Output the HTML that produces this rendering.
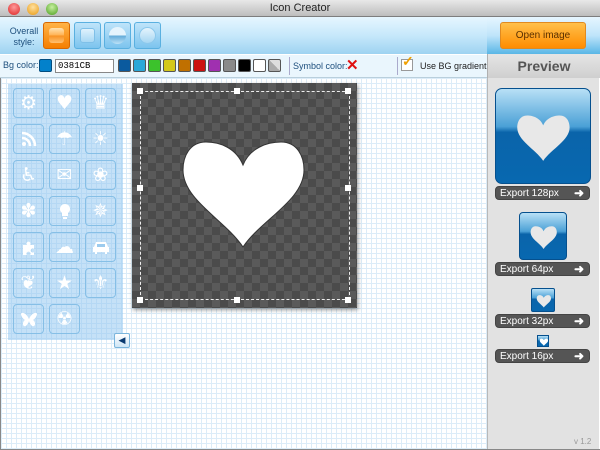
<!DOCTYPE html>
<html><head><meta charset="utf-8"><style>
*{margin:0;padding:0;box-sizing:border-box}
body{width:600px;height:450px;overflow:hidden;font-family:"Liberation Sans",sans-serif;position:relative;background:#fff}
.abs{position:absolute}
#title{left:0;top:0;width:600px;height:17px;background:linear-gradient(#e8e8e8,#bdbdbd);border-bottom:1px solid #7d7d7d;text-align:center;font-size:11px;line-height:17px;color:#222}
.tl{top:3px;width:12px;height:12px;border-radius:50%}
#tb{left:0;top:17px;width:487px;height:37px;background:linear-gradient(#e6f6ff,#c6e8fb 50%,#9ed3f1)}
#tbr{left:487px;top:17px;width:113px;height:37px;background:linear-gradient(#e6f6ff,#bfe4fa 50%,#59b6e6)}
#row2{left:0;top:54px;width:487px;height:24px;background:#eaf6fd;border-top:1px solid #fff;border-bottom:1px solid #b9cfdc}
#prevh{left:487px;top:54px;width:113px;height:24px;background:linear-gradient(#e5e5e5,#cfcfcf);border-left:1px solid #b0b0b0;font-weight:bold;font-size:14px;color:#555;text-align:center;line-height:24px}
#main{left:1px;top:78px;width:486px;height:371px;background-color:#fff;background-image:linear-gradient(#dcecf8 1px,transparent 1px),linear-gradient(90deg,#dcecf8 1px,transparent 1px);background-size:5px 5px}
#side{left:487px;top:78px;width:112px;height:371px;background:#e2e2e2;border-left:1px solid #b8b8b8}
.sb{top:22px;width:27px;height:27px;border-radius:3px;border:1px solid #5ab0e0;background:linear-gradient(#bfe4fa,#7cc4ee)}
.sw{top:59px;width:13px;height:13px;border:1px solid #555;border-radius:2px}
.lbl{font-size:9px;color:#1d4f7d}
#panel{left:8px;top:84px;width:115px;height:256px;background:rgba(150,200,240,.55)}
.ib{width:31px;height:30px;border:1px solid #86bfe6;border-radius:4px;color:#fff;font-family:"DejaVu Sans",sans-serif;font-size:19px;text-align:center;line-height:29px}
#canvas{left:132px;top:83px;width:225px;height:225px;background-color:#4b4b4b;background-image:linear-gradient(45deg,#5a5a5a 25%,transparent 25%,transparent 75%,#5a5a5a 75%),linear-gradient(45deg,#5a5a5a 25%,transparent 25%,transparent 75%,#5a5a5a 75%);background-size:16px 16px;background-position:0 0,8px 8px;box-shadow:1px 2px 4px rgba(0,0,0,.4)}
.h{width:6px;height:6px;background:#fff}
.ex{left:495px;width:95px;height:14px;background:#555;border-radius:4px;color:#fff;font-size:10px;line-height:13px;padding-left:4px;border:1px solid #444}
.ex span{position:absolute;right:5px;top:0;font-weight:bold;font-size:12px}
.ic{background:linear-gradient(#b8e0f6,#4aa0d6 40%,#0a64aa 46%,#0868b0);border:1px solid #05508e;overflow:hidden}
</style></head><body>
<div id="title" class="abs">Icon Creator</div>
<div class="abs tl" style="left:8px;background:radial-gradient(circle at 50% 35%,#ff9a9a,#d22)"></div>
<div class="abs tl" style="left:27px;background:radial-gradient(circle at 50% 35%,#ffe0a0,#e89a10)"></div>
<div class="abs tl" style="left:46px;background:radial-gradient(circle at 50% 35%,#c8f0a0,#4a9e1e)"></div>
<div id="tb" class="abs"></div>
<div id="tbr" class="abs"></div>
<div class="abs lbl" style="left:8px;top:26px;font-size:9px;line-height:11px;text-align:center;width:32px">Overall style:</div>
<div class="abs sb" style="left:43px;background:linear-gradient(#ffb347,#f57f00);border-color:#d86800"><div style="margin:5px;height:15px;border-radius:3px;background:linear-gradient(#ffe2b0,#ffb050 50%,#f79020 50%,#ffc070)"></div></div>
<div class="abs sb" style="left:74px"><div style="margin:5px;height:15px;border-radius:3px;background:linear-gradient(#e0f2fd,#a8d8f4);border:1px solid #7fc0e8"></div></div>
<div class="abs sb" style="left:104px"><div style="margin:4px;height:17px;border-radius:50%;background:linear-gradient(#e5f4fd 50%,#5fa9d8 50%,#bde2f7)"></div></div>
<div class="abs sb" style="left:134px"><div style="margin:4px;height:17px;border-radius:50%;background:linear-gradient(#e5f4fd,#a6d6f2);border:1px solid #8cc8ec"></div></div>
<div class="abs" style="left:500px;top:22px;width:86px;height:27px;border-radius:3px;background:linear-gradient(#ffc04a,#ff8c00);border:1px solid #e08a20;font-size:10px;color:#5a3000;text-align:center;line-height:26px">Open image</div>
<div id="row2" class="abs"></div>
<div class="abs lbl" style="left:3px;top:60px">Bg color:</div>
<div class="abs sw" style="left:39px;background:#0381cb;border-color:#024d80"></div>
<div class="abs" style="left:55px;top:59px;width:59px;height:14px;background:#fff;border:1px solid #888;font-family:'Liberation Mono',monospace;font-size:9px;line-height:12px;padding-left:2px">0381CB</div>
<div class="abs sw" style="left:118px;background:#0a5a9e"></div>
<div class="abs sw" style="left:133px;background:#2aa8d8"></div>
<div class="abs sw" style="left:148px;background:#3cc22c"></div>
<div class="abs sw" style="left:163px;background:#d4c81a"></div>
<div class="abs sw" style="left:178px;background:#c07000"></div>
<div class="abs sw" style="left:193px;background:#cc1010"></div>
<div class="abs sw" style="left:208px;background:#a030b0"></div>
<div class="abs sw" style="left:223px;background:#8a8a8a"></div>
<div class="abs sw" style="left:238px;background:#000"></div>
<div class="abs sw" style="left:253px;background:#fff"></div>
<div class="abs sw" style="left:268px;background:linear-gradient(45deg,#aaa 50%,#ddd 50%)"></div>
<div class="abs" style="left:289px;top:57px;width:1px;height:18px;background:#aac"></div>
<div class="abs lbl" style="left:293px;top:61px">Symbol color:</div>
<div class="abs" style="left:346px;top:59px;width:12px;height:13px;font-weight:bold;color:#e01010;font-size:15px;line-height:13px">✕</div>
<div class="abs" style="left:397px;top:57px;width:1px;height:18px;background:#aac"></div>
<div class="abs" style="left:401px;top:59px;width:12px;height:12px;background:#fff;border:1px solid #999"></div>
<div class="abs" style="left:402px;top:53px;font-size:14px;color:#f0a000;font-weight:bold">✓</div>
<div class="abs" style="left:420px;top:61px;font-size:9px;color:#222">Use BG gradient</div>
<div id="prevh" class="abs">Preview</div>
<div id="main" class="abs"></div>
<div class="abs" style="left:0;top:78px;width:1px;height:372px;background:#888"></div>
<div class="abs" style="left:0;top:449px;width:600px;height:1px;background:#888"></div>
<div id="side" class="abs"></div>
<div id="panel" class="abs"></div>
<div class="abs ib" style="left:13px;top:88px">⚙</div>
<div class="abs ib" style="left:49px;top:88px">♥</div>
<div class="abs ib" style="left:85px;top:88px">♛</div>
<div class="abs ib" style="left:13px;top:124px"><svg width="16" height="16" viewBox="0 0 16 16" style="margin-top:6px"><circle cx="3" cy="13" r="2" fill="#fff"/><path d="M1 7a8 8 0 0 1 8 8M1 2a13 13 0 0 1 13 13" stroke="#fff" stroke-width="2.6" fill="none"/></svg></div>
<div class="abs ib" style="left:49px;top:124px">☂</div>
<div class="abs ib" style="left:85px;top:124px">☀</div>
<div class="abs ib" style="left:13px;top:160px">♿</div>
<div class="abs ib" style="left:49px;top:160px">✉</div>
<div class="abs ib" style="left:85px;top:160px">❀</div>
<div class="abs ib" style="left:13px;top:196px">✽</div>
<div class="abs ib" style="left:49px;top:196px"><svg width="10" height="16" viewBox="0 0 10 16" style="margin-top:7px"><path d="M5 0a5 5 0 0 1 3 9v3H2V9A5 5 0 0 1 5 0z" fill="#fff"/><rect x="3" y="13" width="4" height="2" fill="#fff"/></svg></div>
<div class="abs ib" style="left:85px;top:196px">✵</div>
<div class="abs ib" style="left:13px;top:232px"><svg width="16" height="16" viewBox="0 0 16 16" style="margin-top:7px"><path d="M2 5h4a2 2 0 1 1 3 0h4v4a2 2 0 1 0 0 3v3H9a2 2 0 1 0-3 0H2z" fill="#fff"/></svg></div>
<div class="abs ib" style="left:49px;top:232px">☁</div>
<div class="abs ib" style="left:85px;top:232px"><svg width="18" height="14" viewBox="0 0 18 14" style="margin-top:8px"><path d="M4 1h10l2 5h1v5h-2v2h-2v-2H5v2H3v-2H1V6h1z" fill="#fff"/><rect x="5" y="3" width="8" height="3" fill="#9ccbee"/></svg></div>
<div class="abs ib" style="left:13px;top:268px">❦</div>
<div class="abs ib" style="left:49px;top:268px">★</div>
<div class="abs ib" style="left:85px;top:268px">⚜</div>
<div class="abs ib" style="left:13px;top:304px"><svg width="18" height="16" viewBox="0 0 18 16" style="margin-top:7px"><path d="M9 7C6 0 1 0 1 2s2 5 4 6c-2 1-3 5-1 6s4-2 5-5c1 3 3 6 5 5s1-5-1-6c2-1 4-4 4-6s-5-2-8 5z" fill="#fff"/></svg></div>
<div class="abs ib" style="left:49px;top:304px">☢</div>
<div class="abs" style="left:114px;top:333px;width:16px;height:15px;background:linear-gradient(#fff,#cfe6f6);border:1px solid #7ab5dc;border-radius:2px;font-size:9px;color:#0a3a70;text-align:center;line-height:13px">◀</div>
<div id="canvas" class="abs"></div>
<div class="abs" style="left:140px;top:91px;width:210px;height:209px;border:1px dashed #eee"></div>
<div class="abs h" style="left:137px;top:88px"></div><div class="abs h" style="left:234px;top:88px"></div><div class="abs h" style="left:345px;top:88px"></div>
<div class="abs h" style="left:137px;top:185px"></div><div class="abs h" style="left:345px;top:185px"></div>
<div class="abs h" style="left:137px;top:297px"></div><div class="abs h" style="left:234px;top:297px"></div><div class="abs h" style="left:345px;top:297px"></div>
<svg width="0" height="0" style="position:absolute"><defs><path id="hp" d="M243,165 C236,148 220,142 206,142 C190,142 183,156 183,170 C183,200 225,220 243,247 C261,220 304,200 304,170 C304,156 297,142 281,142 C267,142 250,148 243,165Z"/></defs></svg>
<svg class="abs" style="left:0;top:0" width="600" height="450"><use href="#hp" fill="#fff" stroke="#333" stroke-width="1"/></svg>
<div class="abs ic" style="left:495px;top:88px;width:96px;height:96px;border-radius:7px"><svg width="96" height="96" viewBox="183 130 122 122" style="position:absolute;left:0;top:0"><use href="#hp" fill="#e8e8e8" transform="translate(243 190) scale(.55) translate(-243 -190)"/></svg></div>
<div class="abs ex" style="top:186px">Export 128px<span>➜</span></div>
<div class="abs ic" style="left:519px;top:212px;width:48px;height:48px;border-radius:4px"><svg width="48" height="48" viewBox="183 130 122 122" style="position:absolute;left:0;top:0"><use href="#hp" fill="#e8e8e8" transform="translate(243 190) scale(.55) translate(-243 -190)"/></svg></div>
<div class="abs ex" style="top:262px">Export 64px<span>➜</span></div>
<div class="abs ic" style="left:531px;top:288px;width:24px;height:24px;border-radius:2px"><svg width="24" height="24" viewBox="183 130 122 122" style="position:absolute;left:0;top:0"><use href="#hp" fill="#e8e8e8" transform="translate(243 190) scale(.6) translate(-243 -190)"/></svg></div>
<div class="abs ex" style="top:314px">Export 32px<span>➜</span></div>
<div class="abs ic" style="left:537px;top:335px;width:12px;height:12px"><svg width="12" height="12" viewBox="183 130 122 122" style="position:absolute;left:0;top:0"><use href="#hp" fill="#fff" transform="translate(243 190) scale(.7) translate(-243 -190)"/></svg></div>
<div class="abs ex" style="top:349px">Export 16px<span>➜</span></div>
<div class="abs" style="left:574px;top:437px;font-size:8px;color:#999">v 1.2</div>
</body></html>
